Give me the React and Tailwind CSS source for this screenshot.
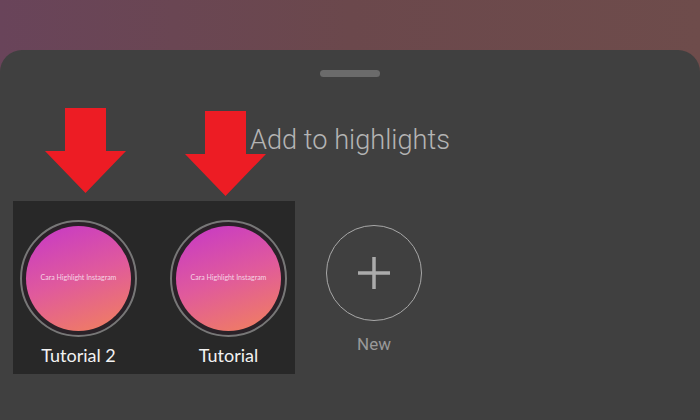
function Arrow({ className }) {
  return (
    <svg className={className} width="81" height="85" viewBox="0 0 81 85">
      <path d="M20 0H61V43H81L40.5 85L0 43H20Z" fill="#ed1c24" />
    </svg>
  );
}

function Highlight({ label }) {
  return (
    <div className="flex w-[117px] flex-col items-center">
      <div className="flex h-[117px] w-[117px] items-center justify-center rounded-full border-2 border-[#777777] bg-[#2a2228]">
        <div className="flex h-[105px] w-[105px] items-center justify-center rounded-full bg-[linear-gradient(160deg,#c83bc4_5%,#e05a9c_50%,#f2825a_100%)]">
          <span className="mb-[2px] whitespace-nowrap font-['Lato',sans-serif] text-[7px] text-[#f6d5e6]">Cara Highlight Instagram</span>
        </div>
      </div>
      <span className="mt-[6px] whitespace-nowrap font-['Lato',sans-serif] text-[18px] leading-[24px] text-[#f2f2f2]">{label}</span>
    </div>
  );
}

export default function App() {
  return (
    <div className="flex h-[420px] w-[700px] flex-col overflow-hidden bg-[linear-gradient(90deg,#69445a,#6b484c_50%,#6e4c4b)] font-['Roboto',sans-serif]">
      <div className="relative mt-[50px] flex-1 rounded-t-[22px] bg-[#404040]">
        <div className="flex justify-center pt-[20px]">
          <div className="h-[7px] w-[60px] rounded-full bg-[#6b6b6b]" />
        </div>
        <h1 className="ml-[250px] mt-[43px] text-[27.2px] font-light leading-[40px] text-[#b4b4b4]">Add to highlights</h1>
        <div className="ml-[13px] mt-[41px] flex items-start">
          <div className="flex h-[173px] w-[282px] gap-[33px] bg-[#282828] pl-[7px] pt-[19px]">
            <Highlight label="Tutorial 2" />
            <Highlight label="Tutorial" />
          </div>
          <div className="ml-[31px] mt-[24px] flex flex-col items-center">
            <div className="flex h-[96px] w-[96px] items-center justify-center rounded-full border border-[#a8a8a8] text-[#a8a8a8]">
              <svg width="32" height="32" viewBox="0 0 32 32">
                <path d="M16 0V32M0 16H32" stroke="#ababab" strokeWidth="3.5" fill="none" />
              </svg>
            </div>
            <span className="mt-[11px] text-[17px] leading-[24px] text-[#999999]">New</span>
          </div>
        </div>
        <Arrow className="absolute left-[45px] top-[58px]" />
        <Arrow className="absolute left-[185px] top-[61px]" />
      </div>
    </div>
  );
}
